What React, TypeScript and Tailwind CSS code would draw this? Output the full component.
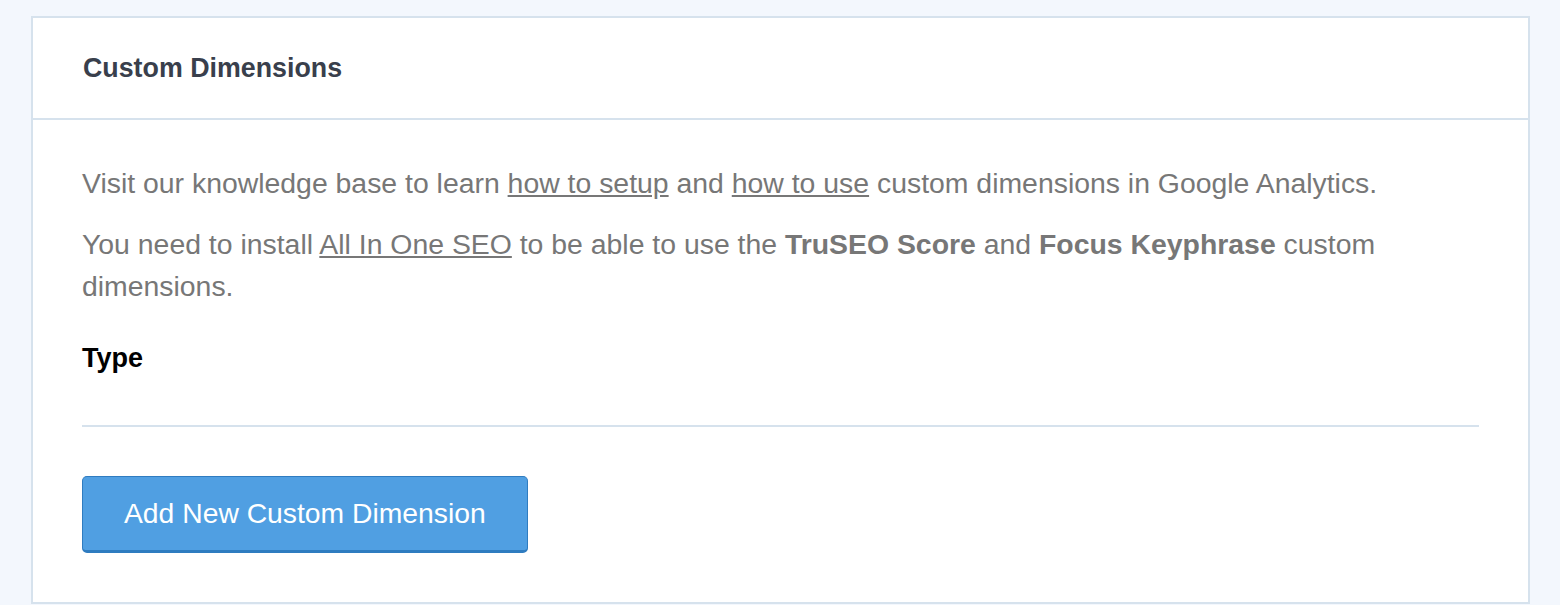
export default function App() {
  return (
    <div
      className="min-h-[605px] bg-[#f3f7fd] pl-[31px] pr-[30px] pt-4"
      style={{ fontFamily: '"Liberation Sans", Arial, sans-serif' }}
    >
      <div className="border-2 border-[#d6e2ed] bg-white">
        <div className="border-b-2 border-[#d6e2ed] px-[50px] h-[102px] flex items-center">
          <h2 className="text-[26.8px] font-bold text-[#393f4c]">Custom Dimensions</h2>
        </div>

        <div className="px-[49px] pt-[42px] pb-[49px]">
          <p className="text-[28.4px] leading-[42px] text-[#777777] mb-[19px]">
            Visit our knowledge base to learn{" "}
            <a href="#" className="underline">how to setup</a> and{" "}
            <a href="#" className="underline">how to use</a> custom dimensions in Google Analytics.
          </p>
          <p className="text-[28.4px] leading-[42px] text-[#777777]">
            You need to install <a href="#" className="underline">All In One SEO</a> to be able
            to use the <strong>TruSEO Score</strong> and <strong>Focus Keyphrase</strong> custom
            dimensions.
          </p>

          <div className="mt-[30px] text-[27px] font-bold text-black leading-[42px]">Type</div>

          <div className="mt-[46px] border-t-2 border-[#d6e2ed]" />

          <button className="mt-[49px] h-[77px] px-[41px] rounded-[5px] bg-[#509fe2] border border-[#2f7cc0] border-b-[3px] text-white text-[28.3px]">
            Add New Custom Dimension
          </button>
        </div>
      </div>
    </div>
  );
}
